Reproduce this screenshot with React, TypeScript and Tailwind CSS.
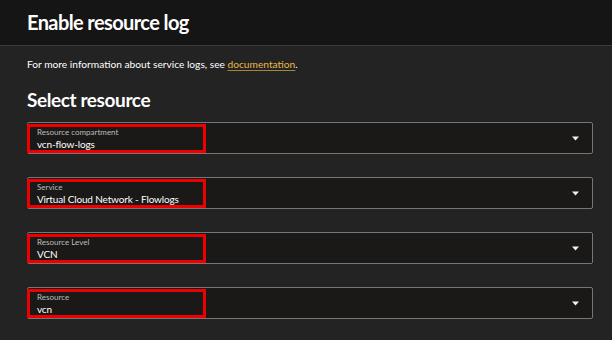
import * as React from "react";

const fields = [
  { label: "Resource compartment", value: "vcn-flow-logs" },
  { label: "Service", value: "Virtual Cloud Network - Flowlogs" },
  { label: "Resource Level", value: "VCN" },
  { label: "Resource", value: "vcn" },
];

function SelectField({ label, value }: { label: string; value: string }) {
  return (
    <div className="relative h-[32px] w-full rounded-[2px] border border-[#767676] bg-[#1a1917]">
      <div className="flex flex-col pl-[9px] pt-[5px] leading-none">
        <span className="text-[8px] text-[#bdbdbd]">{label}</span>
        <span className="mt-[3px] text-[10px] tracking-[-0.15px] text-white">{value}</span>
      </div>
      {/* dropdown caret */}
      <svg className="absolute right-[13px] top-[13px]" width="7" height="5" viewBox="0 0 7 5">
        <path d="M0 0.5 H7 L3.5 4.5 Z" fill="#f2f2f2" />
      </svg>
      {/* red annotation box */}
      <div className="pointer-events-none absolute left-[-1px] top-[1px] h-[29px] w-[179px] border-[3px] border-[#ee0000]" />
    </div>
  );
}

export default function App() {
  return (
    <div className="w-[612px] h-[340px] bg-[#232323] overflow-hidden" style={{ fontFamily: "Lato, 'Noto Sans', sans-serif" }}>
      <header className="h-[46px] bg-[#151515] border-b border-[#3a3a3a] px-[27px] flex items-center">
        <h1 className="text-[20px] font-bold text-white leading-none tracking-[-0.6px] -mt-[1px]">Enable resource log</h1>
      </header>

      <div className="pl-[27px] pr-[19px]">
        <p className="mt-[11px] text-[10.2px] text-white">
          For more information about service logs, see{" "}
          <span className="text-[#e8b94a] underline decoration-[#a88533] underline-offset-2">documentation</span>.
        </p>

        <h2 className="mt-[18px] text-[19px] font-bold text-white leading-none tracking-[-0.4px]">Select resource</h2>

        <div className="mt-[13px] flex flex-col gap-[23px]">
          {fields.map((f) => (
            <SelectField key={f.label} label={f.label} value={f.value} />
          ))}
        </div>
      </div>
    </div>
  );
}
